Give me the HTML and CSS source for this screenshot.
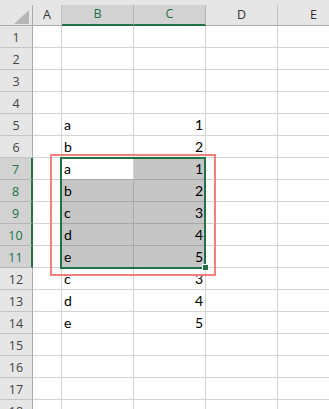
FILE: index.html
```html
<!DOCTYPE html>
<html>
<head>
<meta charset="utf-8">
<link rel="stylesheet" href="styles.css">
</head>
<body>
<div class="sheet">
  <div class="topbar"></div>
  <div class="grid">
    <div class="corner"><svg width="15" height="14" viewBox="0 0 15 14"><polygon points="15,0 15,14 0,14" fill="#b6b6b6"/></svg></div>
    <div class="ch">A</div>
    <div class="ch on">B</div>
    <div class="ch on">C</div>
    <div class="ch">D</div>
    <div class="ch">E</div>

    <div class="rh">1</div><div class="c"></div><div class="c"></div><div class="c"></div><div class="c"></div><div class="c"></div>
    <div class="rh">2</div><div class="c"></div><div class="c"></div><div class="c"></div><div class="c"></div><div class="c"></div>
    <div class="rh">3</div><div class="c"></div><div class="c"></div><div class="c"></div><div class="c"></div><div class="c"></div>
    <div class="rh">4</div><div class="c"></div><div class="c"></div><div class="c"></div><div class="c"></div><div class="c"></div>
    <div class="rh">5</div><div class="c"></div><div class="c">a</div><div class="c num">1</div><div class="c"></div><div class="c"></div>
    <div class="rh">6</div><div class="c"></div><div class="c">b</div><div class="c num">2</div><div class="c"></div><div class="c"></div>
    <div class="rh on">7</div><div class="c"></div><div class="c active">a</div><div class="c num sel">1</div><div class="c"></div><div class="c"></div>
    <div class="rh on">8</div><div class="c"></div><div class="c sel">b</div><div class="c num sel">2</div><div class="c"></div><div class="c"></div>
    <div class="rh on">9</div><div class="c"></div><div class="c sel">c</div><div class="c num sel">3</div><div class="c"></div><div class="c"></div>
    <div class="rh on">10</div><div class="c"></div><div class="c sel">d</div><div class="c num sel">4</div><div class="c"></div><div class="c"></div>
    <div class="rh on">11</div><div class="c"></div><div class="c sel">e</div><div class="c num sel">5</div><div class="c"></div><div class="c"></div>
    <div class="rh">12</div><div class="c"></div><div class="c">c</div><div class="c num">3</div><div class="c"></div><div class="c"></div>
    <div class="rh">13</div><div class="c"></div><div class="c">d</div><div class="c num">4</div><div class="c"></div><div class="c"></div>
    <div class="rh">14</div><div class="c"></div><div class="c">e</div><div class="c num">5</div><div class="c"></div><div class="c"></div>
    <div class="rh">15</div><div class="c"></div><div class="c"></div><div class="c"></div><div class="c"></div><div class="c"></div>
    <div class="rh">16</div><div class="c"></div><div class="c"></div><div class="c"></div><div class="c"></div><div class="c"></div>
    <div class="rh">17</div><div class="c"></div><div class="c"></div><div class="c"></div><div class="c"></div><div class="c"></div>
    <div class="rh">18</div><div class="c"></div><div class="c"></div><div class="c"></div><div class="c"></div><div class="c"></div>
  </div>
  <div class="red-box"></div>
  <div class="sel-box"></div>
  <div class="handle"></div>
</div>
</body>
</html>
```

FILE: styles.css
```css
html, body {
  margin: 0;
  padding: 0;
  background: #ffffff;
  overflow: hidden;
}
.sheet {
  position: relative;
  width: 329px;
  height: 409px;
  overflow: hidden;
}
.topbar {
  height: 5px;
  background: #e6e6e6;
}
.grid {
  display: grid;
  grid-template-columns: 33px 29px 72px 72px 72px 72px;
  grid-template-rows: 21px;
  grid-auto-rows: 22px;
  width: 350px;
}
.grid > div {
  box-sizing: border-box;
}
.corner {
  background: #e6e6e6;
  border-right: 1px solid #ababab;
  border-bottom: 1px solid #ababab;
  display: flex;
  align-items: flex-end;
  justify-content: flex-end;
  padding: 0 3px 1px 0;
}
.corner svg {
  display: block;
}
.ch {
  background: #e6e6e6;
  border-right: 1px solid #c0c0c0;
  border-bottom: 1px solid #ababab;
  font-family: "Open Sans", "DejaVu Sans", sans-serif;
  font-size: 12.5px;
  color: #333333;
  display: flex;
  align-items: center;
  justify-content: center;
  line-height: 1;
}
.ch.on {
  background: #d2d2d2;
  color: #217346;
  border-bottom: 2px solid #217346;
  border-right-color: #b4b4b4;
}
.rh {
  background: #e6e6e6;
  border-right: 1px solid #ababab;
  border-bottom: 1px solid #c4c4c4;
  font-family: "Open Sans", "DejaVu Sans", sans-serif;
  font-size: 12.5px;
  color: #444444;
  display: flex;
  align-items: center;
  justify-content: center;
  padding-top: 3px;
  line-height: 1;
}
.rh.on {
  background: #d2d2d2;
  color: #217346;
  border-right: 2px solid #217346;
  border-bottom-color: #b4b4b4;
}
.c {
  border-right: 1px solid #d4d4d4;
  border-bottom: 1px solid #d4d4d4;
  font-family: Lato, "Liberation Sans", sans-serif;
  font-size: 14px;
  color: #000000;
  line-height: 20px;
  padding: 1px 2px 0 2px;
  white-space: nowrap;
}
.num {
  text-align: right;
}
.sel {
  background: #c6c6c6;
  border-color: #a9a9a9;
}
.active {
  border-bottom-color: #a9a9a9;
}
.red-box {
  position: absolute;
  left: 50px;
  top: 154px;
  width: 166px;
  height: 122px;
  box-sizing: border-box;
  border: 2px solid #f47f7f;
}
.sel-box {
  position: absolute;
  left: 60px;
  top: 157px;
  width: 146px;
  height: 112px;
  box-sizing: border-box;
  border: 2px solid #217346;
}
.handle {
  position: absolute;
  left: 202px;
  top: 264px;
  width: 7px;
  height: 7px;
  box-sizing: border-box;
  background: #217346;
  border: 1px solid #ffffff;
}
```
